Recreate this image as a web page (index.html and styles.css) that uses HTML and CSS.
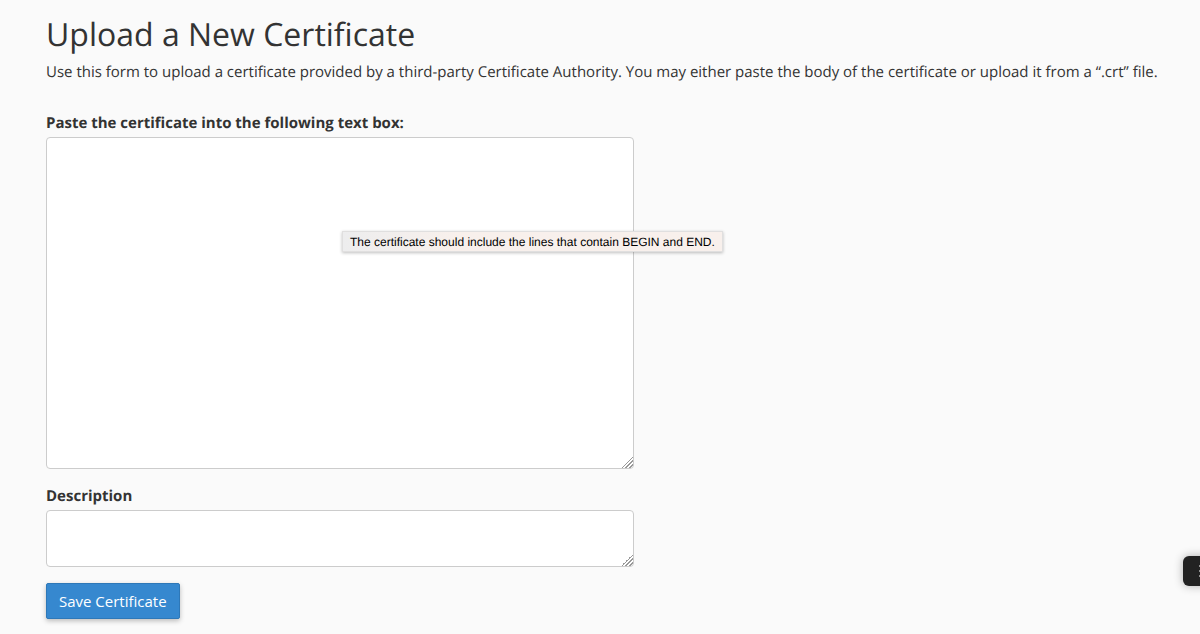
FILE: index.html
```html
<!DOCTYPE html>
<html lang="en">
<head>
    <meta charset="UTF-8">
    <meta name="viewport" content="width=device-width, initial-scale=1.0">
    <title>Upload a New Certificate</title>
    <link rel="stylesheet" href="styles.css">
</head>
<body>
    <main class="content">
        <h1>Upload a New Certificate</h1>
        <p class="description">Use this form to upload a certificate provided by a third-party Certificate Authority. You may either paste the body of the certificate or upload it from a “.crt” file.</p>
        <form class="upload-form">
            <div class="form-group">
                <label for="certificate">Paste the certificate into the following text box:</label>
                <div class="field">
                    <textarea id="certificate" name="certificate" class="certificate" aria-describedby="certificateHint"></textarea>
                    <div id="certificateHint" class="tooltip" role="tooltip">The certificate should include the lines that contain BEGIN and END.</div>
                </div>
            </div>
            <div class="form-group">
                <label for="description">Description</label>
                <div class="field">
                    <textarea id="description" name="description" class="short"></textarea>
                </div>
            </div>
            <button type="submit" class="btn-primary">Save Certificate</button>
        </form>
    </main>
    <button type="button" class="side-tab" aria-label="Open menu">
        <svg width="34" height="30" viewBox="0 0 34 30" aria-hidden="true">
            <path d="M16 10h12M16 15h12M16 20h12" stroke="#fff" stroke-width="1"/>
        </svg>
    </button>
</body>
</html>
```

FILE: styles.css
```css
body {
    margin: 0;
    background-color: #fafafa;
    color: #333;
    font-family: "Open Sans", Arial, sans-serif;
    font-size: 15px;
    line-height: 22px;
    text-rendering: geometricPrecision;
}

.content {
    padding: 15px 16px 15px 46px;
}

h1 {
    margin: 0 0 6px;
    font-size: 32px;
    font-weight: 400;
    line-height: 40px;
}

.description {
    margin: 0 0 29px;
}

.form-group {
    margin-bottom: 16px;
}

label {
    display: block;
    margin-bottom: 3px;
    font-weight: 700;
}

.field {
    position: relative;
    max-width: 588px;
}

textarea {
    display: block;
    width: 100%;
    box-sizing: border-box;
    padding: 6px 12px;
    border: 1px solid #ccc;
    border-radius: 4px;
    background-color: #fff;
    color: #555;
    font: inherit;
    resize: vertical;
}

textarea::-webkit-resizer {
    background: linear-gradient(135deg, transparent 50%, #999 50%, #999 58%, transparent 58%, transparent 66%, #999 66%, #999 74%, transparent 74%, transparent 82%, #999 82%, #999 90%, transparent 90%) no-repeat right bottom / 12px 12px;
}

.certificate {
    height: 332px;
}

.short {
    height: 57px;
}

.tooltip {
    position: absolute;
    top: 94px;
    left: 296px;
    padding: 1px 7px 0;
    border: 1px solid #e0dfdf;
    background: linear-gradient(to right, #ededee, #f8f0ec 30%, #f8f0ec);
    box-shadow: 0 1px 3px rgba(0, 0, 0, 0.25);
    color: #000;
    font-family: "Liberation Sans", Arial, sans-serif;
    font-size: 12px;
    line-height: 18px;
    white-space: nowrap;
}

.btn-primary {
    padding: 6px 12px;
    border: 1px solid #2e78b8;
    border-radius: 2px;
    background-color: #3688cf;
    box-shadow: 0 2px 5px rgba(0, 0, 0, 0.25);
    color: #fff;
    font: inherit;
    cursor: pointer;
}

.side-tab {
    position: fixed;
    right: -17px;
    bottom: 48px;
    padding: 0;
    border: 0;
    border-radius: 6px;
    background-color: #222;
    box-shadow: 0 0 10px rgba(0, 0, 0, 0.3);
    cursor: pointer;
}

.side-tab svg {
    display: block;
}
```
